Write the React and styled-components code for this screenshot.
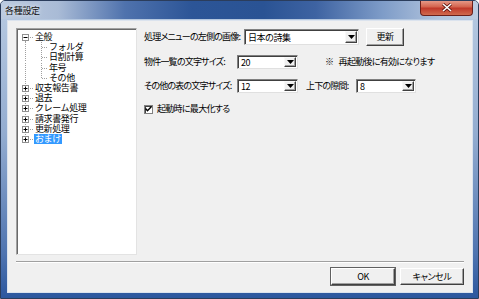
import React from 'react'
import styled, { createGlobalStyle } from 'styled-components'

const GlobalStyle = createGlobalStyle`
  html, body { margin: 0; padding: 0; background: #fff; }
  body {
    font-family: "Noto Sans CJK JP", "Liberation Sans", sans-serif;
    font-size: 9px;
    color: #000;
  }
`

const Window = styled.div`
  width: 479px;
  height: 299px;
  box-sizing: border-box;
  display: flex;
  flex-direction: column;
  border: 1px solid #2b3d5c;
  border-radius: 5px 5px 0 0;
  background: linear-gradient(180deg, #b9cbe2 0%, #93acd0 45%, #4f74b0 85%, #2c579e 100%);
  overflow: hidden;
`

const TitleBar = styled.div`
  height: 20px;
  display: flex;
  align-items: flex-start;
  justify-content: space-between;
  padding-left: 4px;
  background: linear-gradient(90deg, #bccbe0 0%, #a9bbd6 12%, #4f72ad 26%, #2c5597 40%, #2a5394 55%, #3e63a2 66%, #7e9cc8 80%, #b2c4dd 92%, #bccbe0 100%);
`

const Title = styled.span`
  margin-top: 4px;
  font-size: 9px;
  line-height: 11px;
  letter-spacing: -0.3px;
  color: #111;
  text-shadow: 0 0 4px rgba(255,255,255,0.9);
`

const CloseButton = styled.div`
  width: 53px;
  height: 16px;
  margin-top: -1px;
  margin-right: 5px;
  box-sizing: border-box;
  border: 1px solid #6b1f1a;
  border-top: none;
  border-radius: 0 0 4px 4px;
  background: linear-gradient(180deg, #e8a190 0%, #d4644f 45%, #c0392a 55%, #d06a4e 100%);
  display: flex;
  align-items: center;
  justify-content: center;
`

const Client = styled.div`
  flex: 1;
  margin: 1px 5px 5px 6px;
  box-sizing: border-box;
  border: 1px solid #dbe3ee;
  background: #f0f0f0;
  padding: 7px 8px 7px 8px;
  display: flex;
  flex-direction: column;
`

const Body = styled.div`
  display: flex;
  gap: 7px;
`

const TreePanel = styled.div`
  width: 121px;
  height: 227px;
  box-sizing: border-box;
  background: #fff;
  border-top: 1px solid #a0a0a0;
  border-left: 1px solid #a0a0a0;
  border-right: 1px solid #e3e3e3;
  border-bottom: 1px solid #e3e3e3;
  box-shadow: inset 1px 1px 0 #696969;
  padding: 3px 0 0 1px;
`

const TreeRow = styled.div`
  display: flex;
  align-items: center;
  height: 10.2px;
`

const TreeLabel = styled.span`
  font-size: 9px;
  line-height: 10px;
  letter-spacing: -0.4px;
  padding: 0 1px;
  white-space: nowrap;
  background: ${p => (p.selected ? '#3399ff' : 'transparent')};
  color: ${p => (p.selected ? '#fff' : '#000')};
`

const Settings = styled.div`
  flex: 1;
  min-width: 0;
  display: flex;
  flex-direction: column;
`

const Row = styled.div`
  display: flex;
  align-items: center;
  height: ${p => p.h}px;
  margin-top: ${p => p.mt}px;
`

const Label = styled.span`
  width: ${p => p.w}px;
  flex: none;
  margin-left: ${p => p.ml || 0}px;
  font-size: 9px;
  line-height: 12px;
  letter-spacing: -0.8px;
  white-space: nowrap;
  font-feature-settings: "palt";
`

const Note = styled.span`
  flex: none;
  margin-left: ${p => p.ml}px;
  font-size: 9px;
  line-height: 12px;
  letter-spacing: -0.7px;
  word-spacing: 4px;
  white-space: nowrap;
  font-feature-settings: "palt";
`

const Combo = styled.div`
  width: ${p => p.w}px;
  height: ${p => p.h}px;
  flex: none;
  box-sizing: border-box;
  background: #fff;
  border-top: 1px solid #808080;
  border-left: 1px solid #808080;
  border-right: 1px solid #e0e0e0;
  border-bottom: 1px solid #e0e0e0;
  box-shadow: inset 1px 1px 0 #404040;
  display: flex;
  align-items: center;
  padding: 1px 1px 1px 3px;
`

const ComboText = styled.span`
  flex: 1;
  font-size: 9px;
  line-height: 11px;
  letter-spacing: -0.4px;
  white-space: nowrap;
  font-feature-settings: "palt";
`

const ComboArrow = styled.div`
  width: 12px;
  height: 100%;
  box-sizing: border-box;
  background: #f0f0f0;
  border-top: 1px solid #f8f8f8;
  border-left: 1px solid #f8f8f8;
  border-right: 1px solid #404040;
  border-bottom: 1px solid #404040;
  box-shadow: inset -1px -1px 0 #a0a0a0;
  display: flex;
  align-items: center;
  justify-content: center;
`

const Button = styled.div`
  width: ${p => p.w}px;
  height: ${p => p.h}px;
  flex: none;
  box-sizing: border-box;
  margin-left: ${p => p.ml || 0}px;
  background: #f0f0f0;
  border-top: 1px solid #fff;
  border-left: 1px solid #fff;
  border-right: 1px solid #404040;
  border-bottom: 1px solid #404040;
  box-shadow: inset -1px -1px 0 #a0a0a0, ${p => (p.def ? '0 0 0 1px #606060' : '0 0 0 0 transparent')};
  display: flex;
  align-items: center;
  justify-content: center;
  font-size: 9px;
  line-height: 12px;
  letter-spacing: -0.4px;
  font-feature-settings: "palt";
`

const CheckBox = styled.div`
  width: 9px;
  height: 9px;
  flex: none;
  box-sizing: border-box;
  background: #fff;
  border: 1px solid #808080;
  box-shadow: inset 1px 1px 0 #404040;
  margin-right: 4px;
  display: flex;
  align-items: center;
  justify-content: center;
`

const Separator = styled.div`
  margin-top: 6px;
  height: 0;
  border-top: 1px solid #a0a0a0;
  border-bottom: 1px solid #fff;
`

const Footer = styled.div`
  display: flex;
  justify-content: flex-end;
  margin-top: 5px;
  gap: 5px;
`

const Arrow = () => (
  <svg width="7" height="4" viewBox="0 0 7 4">
    <path d="M0 0h7L3.5 4z" fill="#000" />
  </svg>
)

const Gutter = ({ kind, first, last, expander }) => {
  const w = kind === 'root' ? 16 : 30
  const dot = { stroke: '#a0a0a0', strokeWidth: 1, strokeDasharray: '1 1' }
  return (
    <svg width={w} height="10" viewBox={`0 0 ${w} 10`} style={{ flex: 'none' }}>
      {kind === 'root' && (
        <>
          <line x1="7.5" y1={first ? 5 : 0} x2="7.5" y2={last ? 5 : 10} {...dot} />
          <line x1="8" y1="5.5" x2="15" y2="5.5" {...dot} />
          {expander && (
            <>
              <rect x="4.5" y="2.5" width="6" height="6" fill="#fff" stroke="#919191" />
              <line x1="5.5" y1="5.5" x2="9.5" y2="5.5" stroke="#000" />
              {expander === 'plus' && <line x1="7.5" y1="3.5" x2="7.5" y2="7.5" stroke="#000" />}
            </>
          )}
        </>
      )}
      {kind === 'child' && (
        <>
          <line x1="7.5" y1="0" x2="7.5" y2="10" {...dot} />
          <line x1="23.5" y1="0" x2="23.5" y2={last ? 5 : 10} {...dot} />
          <line x1="24" y1="5.5" x2="29" y2="5.5" {...dot} />
        </>
      )}
    </svg>
  )
}

const tree = [
  { label: '全般', kind: 'root', expander: 'minus', first: true },
  { label: 'フォルダ', kind: 'child' },
  { label: '日割計算', kind: 'child' },
  { label: '年号', kind: 'child' },
  { label: 'その他', kind: 'child', last: true },
  { label: '収支報告書', kind: 'root', expander: 'plus' },
  { label: '退去', kind: 'root', expander: 'plus' },
  { label: 'クレーム処理', kind: 'root', expander: 'plus' },
  { label: '請求書発行', kind: 'root', expander: 'plus' },
  { label: '更新処理', kind: 'root', expander: 'plus' },
  { label: 'おまけ', kind: 'root', expander: 'plus', last: true, selected: true },
]

export default function App() {
  return (
    <>
      <GlobalStyle />
      <Window>
        <TitleBar>
          <Title>各種設定</Title>
          <CloseButton>
            <svg width="10" height="9" viewBox="0 0 10 9">
              <path d="M1 1l8 7M9 1L1 8" stroke="#5a1510" strokeWidth="3" />
              <path d="M1 1l8 7M9 1L1 8" stroke="#fff" strokeWidth="1.6" />
            </svg>
          </CloseButton>
        </TitleBar>
        <Client>
          <Body>
            <TreePanel>
              {tree.map(item => (
                <TreeRow key={item.label}>
                  <Gutter kind={item.kind} first={item.first} last={item.last} expander={item.expander} />
                  <TreeLabel selected={item.selected}>{item.label}</TreeLabel>
                </TreeRow>
              ))}
            </TreePanel>
            <Settings>
              <Row h={18} mt={0}>
                <Label w={100}>処理メニューの左側の画像:</Label>
                <Combo w={115} h={16}>
                  <ComboText>日本の詩集</ComboText>
                  <ComboArrow><Arrow /></ComboArrow>
                </Combo>
                <Button w={38} h={18} ml={7}>更新</Button>
              </Row>
              <Row h={16} mt={8}>
                <Label w={93}>物件一覧の文字サイズ:</Label>
                <Combo w={61} h={14}>
                  <ComboText>20</ComboText>
                  <ComboArrow><Arrow /></ComboArrow>
                </Combo>
                <Note ml={27}>※ 再起動後に有効になります</Note>
              </Row>
              <Row h={16} mt={8}>
                <Label w={93}>その他の表の文字サイズ:</Label>
                <Combo w={61} h={14}>
                  <ComboText>12</ComboText>
                  <ComboArrow><Arrow /></ComboArrow>
                </Combo>
                <Label w={50} ml={8}>上下の隙間:</Label>
                <Combo w={60} h={14}>
                  <ComboText>8</ComboText>
                  <ComboArrow><Arrow /></ComboArrow>
                </Combo>
              </Row>
              <Row h={14} mt={8}>
                <CheckBox>
                  <svg width="7" height="6" viewBox="0 0 7 6">
                    <path d="M0.5 2.5l2 2.2L6.5 0.5" stroke="#000" strokeWidth="1.4" fill="none" />
                  </svg>
                </CheckBox>
                <Note ml={0}>起動時に最大化する</Note>
              </Row>
            </Settings>
          </Body>
          <Separator />
          <Footer>
            <Button w={64} h={17} def>OK</Button>
            <Button w={64} h={17}>キャンセル</Button>
          </Footer>
        </Client>
      </Window>
    </>
  )
}
